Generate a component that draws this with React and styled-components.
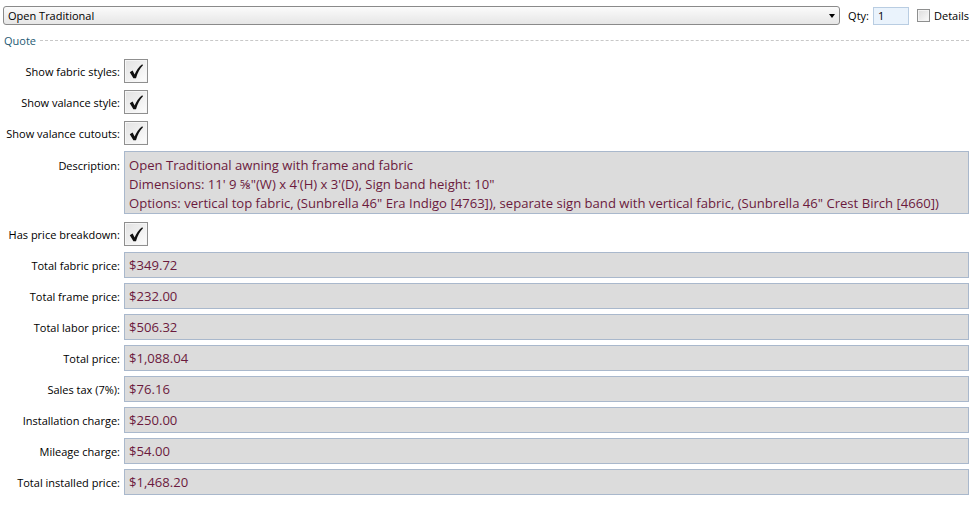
import React from "react";
import styled, { createGlobalStyle } from "styled-components";

const Global = createGlobalStyle`
  html, body { margin: 0; padding: 0; background: #ffffff; }
  body { font-family: "Open Sans", "Noto Sans", sans-serif; }
`;

const Page = styled.div`
  width: 973px;
  height: 506px;
  box-sizing: border-box;
  padding: 6px 4px 0 3px;
  display: flex;
  flex-direction: column;
`;

const TopBar = styled.div`
  display: flex;
  align-items: center;
  height: 19px;
`;

const Combo = styled.div`
  flex: 1;
  height: 19px;
  box-sizing: border-box;
  border: 1px solid #8a8a8a;
  border-radius: 3px;
  background: linear-gradient(#fbfbfb, #e6e6e6);
  display: flex;
  align-items: center;
  padding: 0 0 0 4px;
  font-size: 11px;
  color: #000;
`;

const ComboText = styled.span`
  flex: 1;
`;

const Arrow = styled.span`
  width: 0;
  height: 0;
  border-left: 3.5px solid transparent;
  border-right: 3.5px solid transparent;
  border-top: 4px solid #000;
  margin-right: 4px;
`;

const QtyLabel = styled.span`
  font-size: 11px;
  margin: 0 4px 0 8px;
  color: #000;
`;

const QtyBox = styled.div`
  width: 36px;
  height: 18px;
  box-sizing: border-box;
  border: 1px solid #b9cde2;
  background: #eaf3fc;
  font-size: 11px;
  padding-left: 4px;
  display: flex;
  align-items: center;
`;

const SmallBox = styled.span`
  width: 13px;
  height: 13px;
  box-sizing: border-box;
  border: 1px solid #8e8f8f;
  background: linear-gradient(135deg, #dcdcdc, #fbfbfb);
  box-shadow: inset 0 0 0 1px #f4f4f4;
  margin: 0 4px 0 8px;
`;

const DetailsLabel = styled.span`
  font-size: 11px;
  color: #000;
`;

const GroupHeader = styled.div`
  display: flex;
  align-items: center;
  margin-top: 8px;
  height: 14px;
`;

const GroupTitle = styled.span`
  font-size: 11px;
  color: #1e5a73;
  margin-left: 1px;
`;

const GroupRule = styled.span`
  flex: 1;
  margin-left: 4px;
  border-top: 1px dashed #c8c8c8;
  height: 0;
`;

const Form = styled.div`
  display: flex;
  flex-direction: column;
  gap: 5px;
  margin-top: 11px;
`;

const Row = styled.div`
  display: flex;
  align-items: ${(p) => (p.$top ? "flex-start" : "center")};
  min-height: 26px;
  margin-bottom: ${(p) => p.$after || 0}px;
`;

const Label = styled.div`
  width: 117px;
  flex: none;
  text-align: right;
  font-size: 11px;
  color: #000;
  padding-right: 4px;
  white-space: nowrap;
  padding-top: ${(p) => (p.$top ? "7px" : "0")};
`;

const CheckBox = styled.div`
  width: 24px;
  height: 24px;
  box-sizing: border-box;
  border: 1px solid #8f8f8f;
  background: linear-gradient(135deg, #e2e2e2, #fdfdfd);
  box-shadow: inset 0 0 0 1px #f6f6f6;
  display: flex;
  align-items: center;
  justify-content: center;
`;

const Field = styled.div`
  flex: 1;
  box-sizing: border-box;
  min-height: 26px;
  border: 1px solid #a9b8cc;
  background: #dcdcdc;
  color: #6b1a3d;
  font-size: 13.1px;
  padding: ${(p) => (p.$multi ? "4px 4px 0" : "2px 4px")};
  line-height: 19px;
  display: flex;
  flex-direction: column;
  justify-content: center;
`;

const Check = () => (
  <CheckBox>
    <svg width="16" height="17" viewBox="0 0 16 17">
      <path
        d="M1.8 9.2 L4.6 7.6 L6.6 11.4 C8.4 7.2 10.8 3.6 14.2 1.2 L15 2.2 C12 5.2 9.6 9.6 8 15.2 L5.4 15.2 Z"
        fill="#111"
      />
    </svg>
  </CheckBox>
);

const checks = ["Show fabric styles:", "Show valance style:", "Show valance cutouts:"];

const prices = [
  ["Total fabric price:", "$349.72"],
  ["Total frame price:", "$232.00"],
  ["Total labor price:", "$506.32"],
  ["Total price:", "$1,088.04"],
  ["Sales tax (7%):", "$76.16"],
  ["Installation charge:", "$250.00"],
  ["Mileage charge:", "$54.00"],
  ["Total installed price:", "$1,468.20"],
];

export default function App() {
  return (
    <>
      <Global />
      <Page>
        <TopBar>
          <Combo>
            <ComboText>Open Traditional</ComboText>
            <Arrow />
          </Combo>
          <QtyLabel>Qty:</QtyLabel>
          <QtyBox>1</QtyBox>
          <SmallBox />
          <DetailsLabel>Details</DetailsLabel>
        </TopBar>
        <GroupHeader>
          <GroupTitle>Quote</GroupTitle>
          <GroupRule />
        </GroupHeader>
        <Form>
          {checks.map((c) => (
            <Row key={c}>
              <Label>{c}</Label>
              <Check />
            </Row>
          ))}
          <Row $top $after={2}>
            <Label $top>Description:</Label>
            <Field $multi>
              <span>Open Traditional awning with frame and fabric</span>
              <span>Dimensions: 11' 9 ⅝"(W) x 4'(H) x 3'(D), Sign band height: 10"</span>
              <span>
                Options: vertical top fabric, (Sunbrella 46" Era Indigo [4763]), separate sign band with vertical fabric, (Sunbrella 46" Crest Birch [4660])
              </span>
            </Field>
          </Row>
          <Row>
            <Label>Has price breakdown:</Label>
            <Check />
          </Row>
          {prices.map(([l, v]) => (
            <Row key={l}>
              <Label>{l}</Label>
              <Field>{v}</Field>
            </Row>
          ))}
        </Form>
      </Page>
    </>
  );
}
